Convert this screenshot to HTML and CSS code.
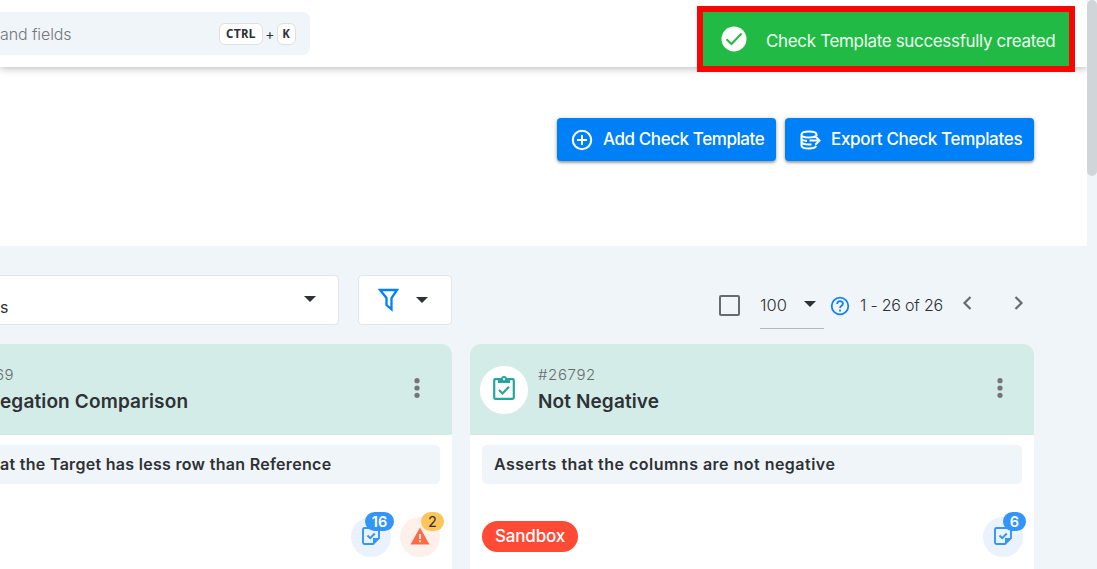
FILE: index.html
```html
<!DOCTYPE html>
<html lang="en">
<head>
<meta charset="utf-8">
<title>Check Templates</title>
<link rel="stylesheet" href="styles.css">
</head>
<body>
<div class="page">
  <header class="topbar">
    <div class="search">
      <span class="search-text">and fields</span>
      <span class="keys"><kbd class="k-ctrl">CTRL</kbd><span class="plus">+</span><kbd class="k-k">K</kbd></span>
    </div>
  </header>
  <section class="hero">
    <button class="btn btn-add">
      <svg width="24" height="24" viewBox="0 0 24 24" fill="none" stroke="#fff" stroke-width="2"><circle cx="12" cy="12" r="9.2"/><path d="M12 7v10M7 12h10"/></svg>
      <span class="add-label">Add Check Template</span>
    </button>
    <button class="btn btn-export">
      <svg width="24" height="24" viewBox="0 0 24 24" fill="none" stroke="#fff" stroke-width="2"><path d="M18.500 8V6.500C18.500 4.500 15.500 3.500 11 3.500S3.500 4.500 3.500 6.500 6.500 9.500 11 9.500c3 0 5.500-.5 6.800-1.500M3.500 6.500v11c0 2 3 3 7.500 3 3.500 0 6.300-.7 7.200-2.500M3.500 10.500c0 1.500 2.500 2.300 5.500 2.500M3.500 14c.5 1.700 3.500 2.500 7.500 2.500h2.500M11.500 12.500H21M17.300 8.300l4.200 4.200-4.200 4.200"/></svg>
      <span class="export-label">Export Check Templates</span>
    </button>
  </section>
  <main class="content">
    <div class="toolbar">
      <div class="select"><span class="select-text">s</span><i class="caret"></i></div>
      <div class="filter">
        <svg width="21" height="24" viewBox="0 0 21 24" fill="none" stroke="#0080ff" stroke-width="2.300"><path d="M2 2h17l-5.500 8v11.300L8.500 17v-7z"/></svg>
        <i class="caret"></i>
      </div>
      <div class="pager">
        <span class="checkbox"></span>
        <div class="size"><span class="size-text">100</span><i class="caret"></i></div>
        <svg class="help" width="20" height="20" viewBox="0 0 20 20" fill="none" stroke="#1581f5" stroke-width="1.800"><circle cx="10" cy="10" r="8.300"/><path d="M7.200 8c0-4 5.700-3.700 5.700-.3 0 2-2.900 2.100-2.900 4.400M10 13.500v2"/></svg>
        <span class="range">1 - 26 of 26</span>
        <svg class="prev" width="10" height="16" viewBox="0 0 10 16" fill="none" stroke="#686b6e" stroke-width="2.200"><path d="M8.500 2L2.500 8l6 6"/></svg>
        <svg class="next" width="10" height="16" viewBox="0 0 10 16" fill="none" stroke="#686b6e" stroke-width="2.200"><path d="M1.500 2l6 6-6 6"/></svg>
      </div>
    </div>
    <div class="cards">
      <article class="card card-left">
        <div class="card-head">
          <div class="titles"><span class="num num-left">69</span><span class="title title-left">egation Comparison</span></div>
          <svg class="dots" width="6" height="20" viewBox="0 0 6 20" fill="#757575"><circle cx="3" cy="2.700" r="2.600"/><circle cx="3" cy="10" r="2.600"/><circle cx="3" cy="17.300" r="2.600"/></svg>
        </div>
        <div class="desc desc-left"><span class="desc-text-left">at the Target has less row than Reference</span></div>
        <div class="card-foot">
          <div class="stat">
            <svg width="20" height="20" viewBox="0 0 20 20" fill="none" stroke="#3395f7" stroke-width="1.900"><path d="M18 10V3.500Q18 2 16.500 2h-13Q2 2 2 3.500v13Q2 18 3.500 18H12l6-6zM6.500 9.500l2.700 2.700 4.600-4.700"/><path d="M12 18v-6h6z" fill="#3395f7" stroke="none"/></svg>
            <span class="badge wide">16</span>
          </div>
          <div class="stat stat-warn">
            <svg width="20" height="18" viewBox="0 0 20 18"><path d="M10 .5L19.500 17.500H.5z" fill="#ff6b45"/><path d="M10 7v5M10 13.300v2" stroke="#fff0ec" stroke-width="1.800"/></svg>
            <span class="badge amber">2</span>
          </div>
        </div>
      </article>
      <article class="card card-right">
        <div class="card-head">
          <div class="avatar">
            <svg width="24" height="26" viewBox="0 0 24 26" fill="none" stroke="#26a69a" stroke-width="2.200"><rect x="2.200" y="4.200" width="19.600" height="19.600" rx="1.200"/><path d="M7 15l3.500 3.500 6.500-6.700"/><path d="M6 4h3a3 3 0 0 1 6 0h3v4H6z" fill="#26a69a" stroke="none"/><circle cx="12" cy="4.100" r="1.200" fill="#fff" stroke="none"/></svg>
          </div>
          <div class="titles"><span class="num">#26792</span><span class="title title-right">Not Negative</span></div>
          <svg class="dots" width="6" height="20" viewBox="0 0 6 20" fill="#757575"><circle cx="3" cy="2.700" r="2.600"/><circle cx="3" cy="10" r="2.600"/><circle cx="3" cy="17.300" r="2.600"/></svg>
        </div>
        <div class="desc"><span class="desc-text-right">Asserts that the columns are not negative</span></div>
        <div class="card-foot foot-right">
          <span class="tag">Sandbox</span>
          <div class="stat">
            <svg width="20" height="20" viewBox="0 0 20 20" fill="none" stroke="#3395f7" stroke-width="1.900"><path d="M18 10V3.500Q18 2 16.500 2h-13Q2 2 2 3.500v13Q2 18 3.500 18H12l6-6zM6.500 9.500l2.700 2.700 4.600-4.700"/><path d="M12 18v-6h6z" fill="#3395f7" stroke="none"/></svg>
            <span class="badge">6</span>
          </div>
        </div>
      </article>
    </div>
  </main>
</div>
<div class="scrollbar"><div class="thumb"></div></div>
<div class="toast">
  <svg width="26" height="26" viewBox="0 0 26 26" fill="none"><circle cx="13" cy="13" r="12.500" fill="#fff"/><path d="M5.500 13.300l5 4.700L20.500 7.500" stroke="#21ba45" stroke-width="2"/></svg>
  <span class="toast-text">Check Template successfully created</span>
</div>
</body>
</html>
```
FILE: styles.css
```css
* { box-sizing: border-box; }
body {
  margin: 0;
  width: 1097px;
  height: 569px;
  overflow: hidden;
  display: flex;
  position: relative;
  font-family: Inter, "Open Sans", sans-serif;
  font-size: 17px;
  color: #2e3135;
  background: #f0f5fa;
}
.page { width: 1087px; height: 569px; overflow: hidden; }
.page span, .toast-text { white-space: nowrap; }

.topbar {
  position: relative;
  height: 67px;
  padding-top: 12px;
  background: #fff;
  box-shadow: 0 1px 8px rgba(0, 0, 0, .3);
}
.search {
  width: 310px;
  height: 43px;
  padding-right: 14px;
  display: flex;
  align-items: center;
  justify-content: space-between;
  background: #f0f5fa;
  border-radius: 0 7px 7px 0;
}
.search-text { font-size: 16px; font-weight: 300; letter-spacing: -.100px; color: #74777a; }
.keys { display: flex; align-items: center; font-size: 12px; }
kbd {
  height: 22px;
  display: flex;
  align-items: center;
  justify-content: center;
  font: bold 12.500px "Noto Sans Mono", "DejaVu Sans Mono", monospace;
  background: #fff;
  border: 1px solid #e0e0e0;
  border-radius: 6px;
}
.k-ctrl { width: 44px; }
.k-k { width: 19px; }
.plus { width: 14px; text-align: center; font-size: 14px; }

.hero {
  height: 179px;
  padding: 51px 53px 0 0;
  display: flex;
  justify-content: flex-end;
  gap: 9px;
  background: #fff;
}
.btn {
  height: 43px;
  padding: 0 0 0 13px;
  display: flex;
  align-items: center;
  border: 0;
  border-radius: 4px;
  font: 500 17px Inter, sans-serif;
  color: #fff;
  background: #0080f6;
  box-shadow: 0 1px 4px rgba(0, 0, 0, .3), 0 2px 2px rgba(0, 0, 0, .2);
}
.btn svg { margin-right: 9px; }
.btn span { padding-bottom: 2px; }
.btn-add { width: 219px; }
.btn-export { width: 249px; }
.add-label { letter-spacing: -.420px; }
.export-label { letter-spacing: -.320px; }

.content { padding-top: 29px; }
.toolbar { height: 50px; display: flex; }
.select, .filter {
  height: 50px;
  display: flex;
  align-items: center;
  background: #fff;
  border: 1px solid #e2e5e8;
  border-radius: 4px;
}
.select {
  width: 339px;
  padding-right: 22px;
  justify-content: space-between;
  border-left: 0;
  border-radius: 0 4px 4px 0;
}
.select-text { padding-top: 14px; font-size: 16px; }
.caret {
  border: 6px solid transparent;
  border-top-color: #2e3135;
  border-bottom: 0;
}
.select .caret { margin-bottom: 2px; }
.filter { width: 94px; margin-left: 19px; padding-left: 19px; gap: 17px; }
.filter svg { margin-bottom: 1px; }
.pager { display: flex; align-items: flex-start; margin-left: 267px; }
.checkbox {
  width: 21px;
  height: 21px;
  margin: 20px 20px 0 0;
  border: 2px solid #686b6e;
  border-radius: 2px;
}
.size {
  width: 64px;
  height: 39px;
  margin-top: 15px;
  padding: 5px 8px 0 0;
  display: flex;
  justify-content: space-between;
  border-bottom: 1px solid #b4b8bc;
  line-height: 20px;
}
.size .caret { margin-top: 6px; }
.size-text { font-size: 16.500px; font-weight: 300; }
.help { margin: 21px 10px 0 6px; }
.range { width: 102px; margin-top: 20px; line-height: 20px; font-size: 16px; font-weight: 300; letter-spacing: -.200px; }
.prev { margin-top: 20px; }
.next { margin: 20px 0 0 42px; }

.cards { display: flex; gap: 18px; margin-top: 19px; }
.card { height: 260px; background: #fff; border-radius: 10px; }
.card-left { width: 452px; border-top-left-radius: 0; }
.card-right { width: 564px; }
.card-head {
  height: 91px;
  display: flex;
  align-items: center;
  background: #d4ece8;
  border-radius: 10px 10px 0 0;
}
.card-left .card-head { border-top-left-radius: 0; }
.avatar {
  width: 48px;
  height: 48px;
  margin: 1px 10px 0 10px;
  display: flex;
  align-items: center;
  justify-content: center;
  background: #fff;
  border-radius: 50%;
}
.avatar svg { margin-bottom: 5px; }
.titles { display: flex; flex-direction: column; margin-top: 2px; }
.num { height: 23px; line-height: 20px; font-size: 15px; font-weight: 300; color: #686b6e; letter-spacing: .600px; }
.num-left { margin-left: -5px; }
.title { line-height: 28px; font-size: 19px; font-weight: 600; }
.title-left { letter-spacing: .140px; }
.title-right { letter-spacing: .120px; }
.dots { margin: -4px 32px 0 auto; }
.card-right .dots { margin-right: 31px; }
.desc {
  height: 39px;
  margin: 10px 12px 0;
  padding-left: 12px;
  line-height: 38px;
  font-size: 16px;
  font-weight: 600;
  background: #f0f5fa;
  border-radius: 5px;
}
.desc-left { margin-left: 0; padding-left: 0; border-radius: 0 5px 5px 0; }
.desc-text-left { letter-spacing: .300px; }
.desc-text-right { letter-spacing: .480px; }
.card-foot { display: flex; align-items: center; gap: 9px; margin: 33px 12px 0; height: 40px; }
.foot-right { margin-right: 11px; }
.card-foot .stat:first-child { margin-left: auto; }
.tag {
  width: 96px;
  height: 31px;
  margin: 0 auto 1px 0;
  line-height: 31px;
  text-align: center;
  font-weight: 500;
  letter-spacing: -.200px;
  color: #fff;
  background: #ff4a35;
  border-radius: 16px;
}
.stat {
  position: relative;
  width: 40px;
  height: 40px;
  display: flex;
  align-items: center;
  justify-content: center;
  background: #eaf2fe;
  border-radius: 50%;
}
.stat svg { margin-bottom: 2px; }
.stat-warn { background: #fff0ec; }
.badge {
  position: absolute;
  top: -5px;
  right: -4px;
  width: 23px;
  height: 19px;
  line-height: 19px;
  text-align: center;
  font-size: 14.500px;
  font-weight: 600;
  color: #fff;
  background: #3395f7;
  border-radius: 10px;
}
.foot-right .badge { right: -3px; }
.badge.wide { width: 29px; right: -3px; }
.badge.amber { color: #2e3135; background: #ffc55a; font-weight: 400; }

.scrollbar { width: 10px; height: 569px; background: #f0f5fa; }
.thumb { height: 176px; background: #d0d5da; border-radius: 5px; }

.toast {
  position: absolute;
  left: 697px;
  top: 6px;
  width: 378px;
  height: 66px;
  padding-left: 18px;
  display: flex;
  align-items: center;
  gap: 19px;
  color: #edfff1;
  background: #21ba45;
  border: 6px solid #f80606;
}
.toast-text { padding-top: 4px; letter-spacing: -.340px; }
```
